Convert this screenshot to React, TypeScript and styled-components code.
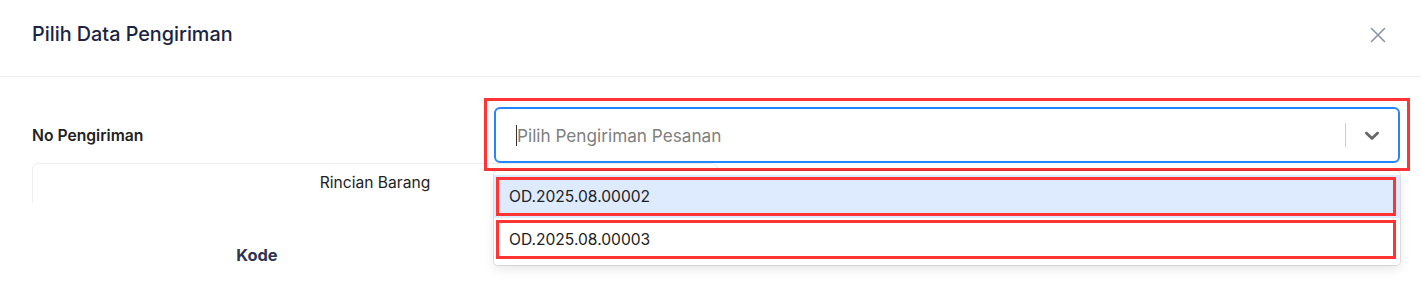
import React from "react";
import styled, { createGlobalStyle } from "styled-components";

const GlobalStyle = createGlobalStyle`
  html, body { margin: 0; padding: 0; background: #ffffff; }
  body { font-family: Inter, "Noto Sans", "Liberation Sans", sans-serif; -webkit-font-smoothing: antialiased; }
  * { box-sizing: border-box; }
`;

const Modal = styled.div`
  width: 1421px;
  height: 289px;
  background: #fff;
  overflow: hidden;
`;

const Header = styled.header`
  height: 77px;
  display: flex;
  align-items: center;
  justify-content: space-between;
  padding: 0 35px 6px 32px;
  border-bottom: 1px solid #eef0f3;
`;

const Title = styled.h2`
  margin: -3px 0 0 0;
  font-size: 19.8px;
  line-height: 24px;
  font-weight: 500;
  color: #1b2343;
`;

const CloseButton = styled.button`
  width: 16px;
  height: 16px;
  padding: 0;
  border: none;
  background: none;
  display: flex;
  align-items: center;
  justify-content: center;
  color: #8b93a7;
  cursor: pointer;
`;

const Body = styled.div`
  padding: 30px 21px 0 32px;
`;

const FieldRow = styled.div`
  display: grid;
  grid-template-columns: 462px 1fr;
  align-items: center;
`;

const Label = styled.label`
  font-size: 15.7px;
  font-weight: 600;
  color: #222;
`;

const SelectWrap = styled.div`
  position: relative;
  &::before {
    content: "";
    position: absolute;
    top: -9px;
    left: -10px;
    right: -10px;
    bottom: -8px;
    border: 3px solid #ff3535;
    pointer-events: none;
  }
`;

const Control = styled.div`
  position: relative;
  height: 56px;
  border: 2px solid #2684ff;
  border-radius: 6px;
  display: flex;
  align-items: center;
  background: #fff;
`;

const ValueBox = styled.div`
  flex: 1;
  display: flex;
  align-items: center;
  padding-left: 20px;
  height: 100%;
`;

const Caret = styled.span`
  width: 1px;
  height: 21px;
  background: #333;
`;

const Placeholder = styled.span`
  font-size: 17.2px;
  color: #808080;
`;

const Separator = styled.span`
  width: 1px;
  height: 24px;
  background: #cccccc;
`;

const Indicator = styled.div`
  width: 52px;
  display: flex;
  align-items: center;
  justify-content: center;
  color: #666;
`;

const Menu = styled.div`
  position: absolute;
  top: calc(100% + 8px);
  left: 0;
  right: 0;
  background: #fff;
  border-radius: 4px;
  padding: 4px 0;
  box-shadow: 0 0 0 1px rgba(0, 0, 0, 0.1), 0 4px 11px rgba(0, 0, 0, 0.1);
  z-index: 5;
`;

const Option = styled.div<{ $focused?: boolean }>`
  position: relative;
  height: 43px;
  display: flex;
  align-items: center;
  padding: 0 15px;
  font-size: 15.6px;
  color: #222;
  background: ${(p) => (p.$focused ? "#deebff" : "#fff")};
  &::after {
    content: "";
    position: absolute;
    top: 2px;
    left: 2px;
    right: 4px;
    bottom: 2px;
    border: 3px solid #ff3535;
    pointer-events: none;
  }
`;

const Card = styled.section`
  width: 686px;
`;

const CardHeader = styled.div`
  height: 40px;
  border: 1px solid #eceef1;
  border-bottom: none;
  border-radius: 6px 6px 0 0;
  display: flex;
  align-items: center;
  justify-content: center;
  font-size: 15.6px;
  color: #222;
  padding-bottom: 2px;
`;

const TableHead = styled.div`
  display: grid;
  grid-template-columns: 450px 1fr;
  padding-top: 42px;
`;

const HeadCell = styled.div`
  text-align: center;
  font-size: 16.4px;
  line-height: 20px;
  font-weight: 700;
  color: #2c3451;
`;

const ChevronDown = () => (
  <svg width="24" height="24" viewBox="0 0 20 20" fill="currentColor" aria-hidden="true">
    <path d="M4.516 7.548c0.436-0.446 1.043-0.481 1.576 0l3.908 3.747 3.908-3.747c0.533-0.481 1.141-0.446 1.574 0 0.436 0.445 0.408 1.197 0 1.615-0.406 0.418-4.695 4.502-4.695 4.502-0.217 0.223-0.502 0.335-0.787 0.335s-0.57-0.112-0.789-0.335c0 0-4.287-4.084-4.695-4.502s-0.436-1.17 0-1.615z" />
  </svg>
);

const CloseIcon = () => (
  <svg width="16" height="16" viewBox="0 0 16 16" fill="none" stroke="currentColor" strokeWidth="1.6" strokeLinecap="round">
    <path d="M1.5 1.5L14.5 14.5M14.5 1.5L1.5 14.5" />
  </svg>
);

const options = [
  { id: "OD.2025.08.00002", focused: true },
  { id: "OD.2025.08.00003", focused: false },
];

export default function App() {
  return (
    <>
      <GlobalStyle />
      <Modal>
        <Header>
          <Title>Pilih Data Pengiriman</Title>
          <CloseButton aria-label="Tutup">
            <CloseIcon />
          </CloseButton>
        </Header>
        <Body>
          <FieldRow>
            <Label>No Pengiriman</Label>
            <SelectWrap>
              <Control>
                <ValueBox>
                  <Caret />
                  <Placeholder>Pilih Pengiriman Pesanan</Placeholder>
                </ValueBox>
                <Separator />
                <Indicator>
                  <ChevronDown />
                </Indicator>
              </Control>
              <Menu>
                {options.map((o) => (
                  <Option key={o.id} $focused={o.focused}>
                    {o.id}
                  </Option>
                ))}
              </Menu>
            </SelectWrap>
          </FieldRow>
          <Card>
            <CardHeader>Rincian Barang</CardHeader>
            <TableHead>
              <HeadCell>Kode</HeadCell>
              <HeadCell />
            </TableHead>
          </Card>
        </Body>
      </Modal>
    </>
  );
}
